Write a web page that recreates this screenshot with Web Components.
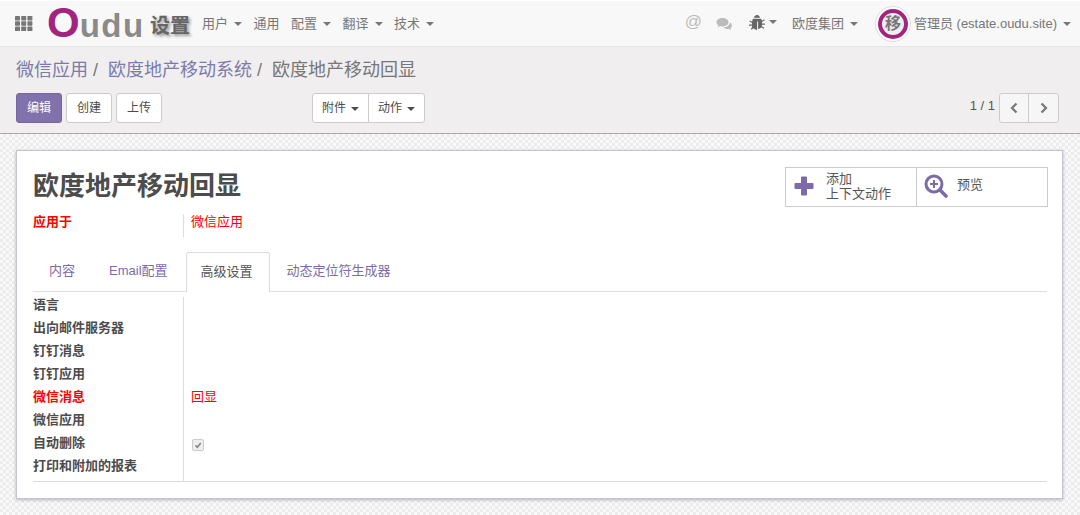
<!DOCTYPE html>
<html lang="zh">
<head>
<meta charset="utf-8">
<title>欧度地产移动回显</title>
<style>
  html, body { margin: 0; padding: 0; height: 100%; }
  body {
    font: 13px "Liberation Sans", "Noto Sans CJK SC", sans-serif;
    color: #4c4c4c;
    overflow: hidden;
  }
  oe-app { height: 515px; }
</style>
</head>
<body>
<oe-app>
  <oe-navbar slot="nav"></oe-navbar>
  <oe-panel slot="panel"></oe-panel>
  <oe-sheet title="欧度地产移动回显">
    <oe-row slot="head" label="应用于" required value="微信应用"></oe-row>
    <oe-row label="语言"></oe-row>
    <oe-row label="出向邮件服务器"></oe-row>
    <oe-row label="钉钉消息"></oe-row>
    <oe-row label="钉钉应用"></oe-row>
    <oe-row label="微信消息" required value="回显"></oe-row>
    <oe-row label="微信应用"></oe-row>
    <oe-row label="自动删除" checkbox></oe-row>
    <oe-row label="打印和附加的报表"></oe-row>
  </oe-sheet>
</oe-app>

<script>
// caret used by every dropdown
const CARET = '<i class="caret"></i>';
const CARET_CSS = `.caret { display: inline-block; width: 0; height: 0; margin-left: 6px; vertical-align: middle;
  border-top: 4px solid currentColor; border-left: 4px solid transparent; border-right: 4px solid transparent; }`;

class OeApp extends HTMLElement {
  constructor() {
    super();
    this.attachShadow({ mode: 'open' }).innerHTML = `
      <style>
        :host { display: flex; flex-direction: column; width: 1080px; }
        .main {
          flex: 1; padding: 16px 16px 0 16px; box-sizing: border-box;
          background-color: #f4f4f4;
          background-image: conic-gradient(#ececec 25%, #f9f9f9 0 50%, #ececec 0 75%, #f9f9f9 0);
          background-size: 6px 6px;
        }
      </style>
      <slot name="nav"></slot>
      <slot name="panel"></slot>
      <div class="main"><slot></slot></div>`;
  }
}

class OeNavbar extends HTMLElement {
  constructor() {
    super();
    const menus = [['用户', 1], ['通用', 0], ['配置', 1], ['翻译', 1], ['技术', 1]];
    this.attachShadow({ mode: 'open' }).innerHTML = `
      <style>
        :host {
          display: flex; align-items: center; height: 46px; box-sizing: border-box;
          margin-top: 1px; background: #f8f8f8; border-bottom: 1px solid #e7e7e7;
          font-size: 13px; color: #777; padding: 0 9px 0 15px; white-space: nowrap;
        }
        ${CARET_CSS}
        .apps { width: 18px; height: 15px; display: block; margin-right: 14px; }
        .logo { display: flex; align-items: baseline; font-weight: bold; height: 46px; line-height: 46px; margin-top: -1px; width: 103px; }
        .logo b { color: #a3247f; font-size: 42px; }
        .logo span { color: #8a8a8a; font-size: 33px; letter-spacing: 1.5px; }
        .title { font-size: 20px; font-weight: bold; color: #666; text-shadow: 2px 2px 3px #999; margin: 2px 12px 0 0; }
        .menu { display: flex; gap: 11.5px; padding-bottom: 3px; }
        .spacer { flex: 1; }
        .right { display: flex; align-items: center; }
        .right > span:not(.avatar) { padding-bottom: 3px; }
        .at { font-size: 17px; color: #bbb; margin-right: 14px; }
        .chat { width: 17px; height: 14px; margin-right: 16px; display: block; }
        .bug { width: 16px; height: 16px; display: block; }
        .bugwrap { display: flex; align-items: center; margin-right: 15px; }
        .bugwrap .caret { margin-left: 4px; }
        .company { margin-right: 17px; }
        .avatar {
          width: 36px; height: 36px; border-radius: 50%; box-sizing: border-box; margin-right: 3px;
          background: #fff; border: 1px solid #ddd; padding: 2px; display: block;
        }
        .avatar div {
          width: 100%; height: 100%; box-sizing: border-box; border-radius: 50%; border: 4px solid #a3247f;
          background: #eee; color: #777; font-size: 16px; font-weight: bold; line-height: 22px; text-align: center;
        }
      </style>
      <svg class="apps" viewBox="0 0 18 15" fill="#777">
        ${[0, 1, 2].map(r => [0, 1, 2].map(c =>
          `<rect x="${c * 6.2}" y="${r * 5.3}" width="5" height="4.400" rx=".6"/>`).join('')).join('')}
      </svg>
      <div class="logo"><b>O</b><span>udu</span></div>
      <div class="title">设置</div>
      <div class="menu">${menus.map(m => `<span>${m[0]}${m[1] ? CARET : ''}</span>`).join('')}</div>
      <div class="spacer"></div>
      <div class="right">
        <span class="at">@</span>
        <svg class="chat" viewBox="0 0 17 14" fill="#bbb">
          <path d="M6.500 1C3 1 .5 2.900.5 5.200c0 1.300.8 2.500 2 3.200-.2.700-.6 1.300-1.100 1.800 1.100-.1 2.100-.5 2.900-1.100.7.200 1.400.3 2.200.3 3.500 0 6-1.900 6-4.200S10 1 6.500 1z"/>
          <path d="M14 5.200c0 2.900-3 5-6.700 5.100.9 1 2.400 1.600 4 1.600.5 0 1-.1 1.500-.2.700.6 1.500 1 2.500 1.100-.4-.5-.7-1-.9-1.600 1-.7 1.600-1.600 1.600-2.700 0-1.300-.8-2.400-2-3.100z"/>
        </svg>
        <span class="bugwrap">
          <svg class="bug" viewBox="0 0 15 15" fill="#666">
            <path d="M4.700 3.500C5 1.900 6.100 1 7.500 1s2.500.9 2.800 2.500z"/>
            <path d="M3.700 4.500h7.600c.5.600.7 1.200.8 1.800l2.100-1.300.6.900-2.600 1.600v1.500h2.800v1.100h-2.800c0 .5-.1.900-.2 1.300l2.300 1.500-.6.900-2.100-1.400c-.8 1-1.900 1.600-3.100 1.600V7h-.9v7.900c-1.200 0-2.300-.6-3.100-1.600l-2.100 1.400-.6-.9L3 12.300c-.1-.4-.2-.8-.2-1.300H0V9.900h2.800V8.500L.2 6.900l.6-.9 2.100 1.300c.1-1 .3-1.900.8-2.800z"/>
          </svg>${CARET}
        </span>
        <span class="company">欧度集团${CARET}</span>
        <span class="avatar"><div>移</div></span>
        <span class="user">管理员 (estate.oudu.site)${CARET}</span>
      </div>`;
  }
}

class OePanel extends HTMLElement {
  constructor() {
    super();
    this.attachShadow({ mode: 'open' }).innerHTML = `
      <style>
        :host {
          display: block; height: 87px; box-sizing: border-box; padding: 10px 21px 0 16px;
          background: #f0eeee; border-bottom: 1px solid #a9a9a9; font-size: 13px;
        }
        ${CARET_CSS}
        .crumbs { font-size: 18px; line-height: 26px; color: #777; white-space: pre; height: 36px; }
        .crumbs a { color: #7c7bad; }
        .bar { display: flex; align-items: flex-start; }
        button {
          font: inherit; font-size: 12px; height: 30px; padding: 0 9px 3px; background: #fff; color: #4c4c4c;
          border: 1px solid #ccc; border-radius: 3px; margin: 0;
        }
        .primary { background: #8272ab; border-color: #7566a0; color: #fff; margin-right: 4px; width: 46px; }
        .plain { margin-right: 4px; width: 46px; }
        .group { display: flex; margin-left: 146px; }
        .group button:first-child { border-radius: 3px 0 0 3px; width: 57px; }
        .group button:last-child { border-radius: 0 3px 3px 0; margin-left: -1px; width: 57px; }
        .group .caret { margin-left: 5px; }
        .pager { margin-left: auto; display: flex; align-items: flex-start; color: #555; }
        .pager span { margin-right: 4px; line-height: 26px; }
        .pager button { padding: 0; background: #f6f6f6; display: flex; align-items: center; justify-content: center; }
        .pager button:nth-of-type(1) { width: 30px; border-radius: 3px 0 0 3px; }
        .pager button:nth-of-type(2) { width: 31px; border-radius: 0 3px 3px 0; margin-left: -1px; }
        svg { width: 10px; height: 12px; display: block; }
      </style>
      <div class="crumbs"><a>微信应用</a> /  <a>欧度地产移动系统</a> /  欧度地产移动回显</div>
      <div class="bar">
        <button class="primary">编辑</button>
        <button class="plain">创建</button>
        <button class="plain">上传</button>
        <div class="group"><button>附件${CARET}</button><button>动作${CARET}</button></div>
        <div class="pager">
          <span>1 / 1</span>
          <button><svg viewBox="0 0 10 12"><path d="M7.500 1.500 3 6l4.500 4.500" fill="none" stroke="#777" stroke-width="2.200"/></svg></button>
          <button><svg viewBox="0 0 10 12"><path d="M2.500 1.500 7 6l-4.500 4.500" fill="none" stroke="#777" stroke-width="2.200"/></svg></button>
        </div>
      </div>`;
  }
}

class OeSheet extends HTMLElement {
  constructor() {
    super();
    const tabs = ['内容', 'Email配置', '高级设置', '动态定位符生成器'];
    this.attachShadow({ mode: 'open' }).innerHTML = `
      <style>
        :host {
          display: block; height: 349px; box-sizing: border-box; padding: 16px 15px 0 16px; background: #fff;
          border: 1px solid #c5c3d6; box-shadow: 0 1px 3px rgba(0, 0, 0, .25); width: 1047px;
        }
        .top { display: flex; justify-content: space-between; align-items: flex-start; height: 45px; margin-right: -1px; }
        h1 { margin: 0; padding-top: 1px; font-size: 26px; font-weight: bold; line-height: 36px; color: #4c4c4c; }
        .stats { display: flex; width: 263px; height: 40px; box-sizing: border-box; border: 1px solid #ccc; font-size: 13px; color: #555; }
        .stat { display: flex; align-items: center; flex: 1; box-sizing: border-box; padding: 0 0 2px 8px; line-height: 15px; }
        .stat:first-child { flex: none; width: 130px; }
        .stat + .stat { border-left: 1px solid #ccc; padding-left: 7px; }
        .stat svg { display: block; flex: none; }
        .stat span { margin-left: 12px; }
        .stat + .stat span { margin: 0 0 3px 9px; }
        .head { padding-top: 2px; height: 28px; }
        ul { list-style: none; margin: 10px 0 0 0; padding: 0; display: flex; height: 39px; border-bottom: 1px solid #ddd; }
        li { padding: 0 18px 0 16px; line-height: 38px; color: #7c6ba8; height: 39px; }
        li.active {
          color: #555; background: #fff; border: 1px solid #ddd; border-bottom: 0; border-radius: 3px 3px 0 0;
          height: 40px; padding: 0 16px 0 14px; margin-right: 1px; box-sizing: border-box;
        }
        .rows { border-bottom: 1px solid #ddd; margin-top: 5px; height: 185px; box-sizing: border-box; }
      </style>
      <div class="top">
        <h1>${this.getAttribute('title')}</h1>
        <div class="stats">
          <div class="stat">
            <svg width="20" height="20" viewBox="0 0 20 20" fill="#7c6ba8"><path d="M7.500 1h5v6.500H19v5h-6.500V19h-5v-6.500H1v-5h6.500z" stroke="#7c6ba8" stroke-linejoin="round"/></svg>
            <span>添加<br>上下文动作</span>
          </div>
          <div class="stat">
            <svg width="24" height="24" viewBox="0 0 24 24" fill="none" stroke="#7c6ba8"><circle cx="10" cy="10" r="8" stroke-width="3"/><path d="m16 16 6 6" stroke-width="3.600" stroke-linecap="round"/><path d="M10 6v8M6 10h8" stroke-width="2"/></svg>
            <span>预览</span>
          </div>
        </div>
      </div>
      <div class="head"><slot name="head"></slot></div>
      <ul>${tabs.map((t, i) => `<li class="${i === 2 ? 'active' : ''}">${t}</li>`).join('')}</ul>
      <div class="rows"><slot></slot></div>`;
  }
}

class OeRow extends HTMLElement {
  constructor() {
    super();
    const color = this.hasAttribute('required') ? '#f00' : 'inherit';
    const value = this.hasAttribute('checkbox')
      ? `<span class="box"><svg viewBox="0 0 12 12"><path d="m3 6.500 2.200 2.200L9.300 3.500" fill="none" stroke="#888" stroke-width="2"/></svg></span>`
      : (this.getAttribute('value') || '');
    this.attachShadow({ mode: 'open' }).innerHTML = `
      <style>
        :host { display: grid; grid-template-columns: 150px 1fr; height: 23px; line-height: 16px; font-size: 13px; color: #4c4c4c; }
        .label { font-weight: bold; color: ${color}; }
        .value { border-left: 1px solid #ddd; padding-left: 7px; color: ${color}; display: flex; align-items: flex-start; }
        .box { display: block; width: 10px; height: 10px; background: #eee; border: 1px solid #ccc; border-radius: 2px; margin: 4px 0 0 1px; }
        .box svg { display: block; width: 10px; height: 10px; }
      </style>
      <div class="label">${this.getAttribute('label')}</div>
      <div class="value">${value}</div>`;
  }
}

customElements.define('oe-app', OeApp);
customElements.define('oe-navbar', OeNavbar);
customElements.define('oe-panel', OePanel);
customElements.define('oe-sheet', OeSheet);
customElements.define('oe-row', OeRow);
</script>
</body>
</html>
